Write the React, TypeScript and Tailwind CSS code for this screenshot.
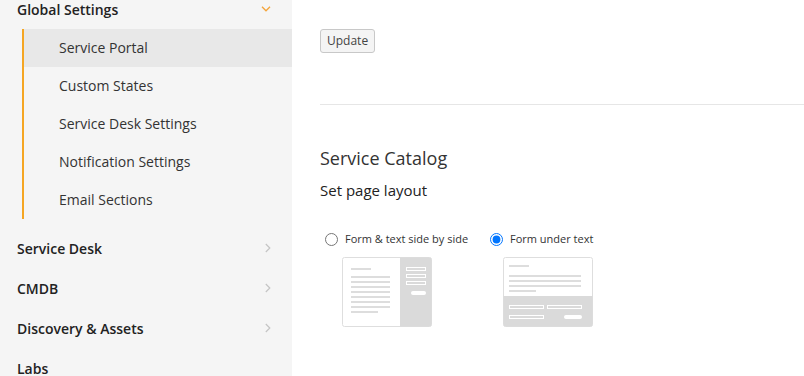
import React from "react";

const font = { fontFamily: '"Open Sans", "Liberation Sans", sans-serif' };

function ChevronDown() {
  return (
    <svg width="10" height="6" viewBox="0 0 10 6" className="block">
      <path d="M1 0.8 L5 4.8 L9 0.8" fill="none" stroke="#f4a43a" strokeWidth="1.3" />
    </svg>
  );
}

function ChevronRight() {
  return (
    <svg width="6" height="10" viewBox="0 0 6 10" className="block">
      <path d="M0.8 1 L4.8 5 L0.8 9" fill="none" stroke="#c4c4c4" strokeWidth="1.2" />
    </svg>
  );
}

function TopItem({ label, open, leaf }: { label: string; open?: boolean; leaf?: boolean }) {
  return (
    <div className="flex h-[40px] items-center justify-between pl-[17px] pr-[21px]">
      <span className="text-[14px] font-semibold text-[#222]">{label}</span>
      {leaf ? null : open ? <ChevronDown /> : <ChevronRight />}
    </div>
  );
}

function SubItem({ label, active }: { label: string; active?: boolean }) {
  return (
    <div
      className={`flex h-[38px] items-center pb-[1px] pl-[35px] text-[14px] text-[#333] ${
        active ? "bg-[#e8e8e8]" : ""
      }`}
    >
      {label}
    </div>
  );
}

function ThumbSide() {
  const lines = [19, 24, 29, 34, 39, 44, 49];
  return (
    <svg width="90" height="70" viewBox="0 0 90 70" className="block">
      <rect x="0.5" y="0.5" width="89" height="69" rx="2" fill="#fff" stroke="#dedede" />
      <path d="M58 0.5 H87.5 A2 2 0 0 1 89.5 2.5 V67.5 A2 2 0 0 1 87.5 69.5 H58 Z" fill="#dadada" />
      <rect x="9" y="11" width="20" height="2" fill="#dddddd" />
      {lines.map((y) => (
        <rect key={y} x="9" y={y} width="39" height="2" fill="#dddddd" />
      ))}
      <rect x="9" y="54" width="27" height="2" fill="#dddddd" />
      {[10, 17, 24].map((y) => (
        <rect key={y} x="64.5" y={y + 0.5} width="19" height="3" fill="none" stroke="#fff" strokeWidth="1" />
      ))}
      <rect x="69" y="34" width="15" height="4" rx="2" fill="#fff" />
    </svg>
  );
}

function ThumbUnder() {
  return (
    <svg width="90" height="70" viewBox="0 0 90 70" className="block">
      <rect x="0.5" y="0.5" width="89" height="69" rx="2" fill="#fff" stroke="#dedede" />
      <path d="M0.5 39 H89.5 V67.5 A2 2 0 0 1 87.5 69.5 H2.5 A2 2 0 0 1 0.5 67.5 Z" fill="#dadada" />
      <rect x="6" y="8" width="20" height="2" fill="#dddddd" />
      {[18, 23, 28].map((y) => (
        <rect key={y} x="6" y={y} width="72" height="2" fill="#dddddd" />
      ))}
      <rect x="6" y="33" width="27" height="2" fill="#dddddd" />
      <rect x="6.5" y="48.5" width="34" height="3" fill="none" stroke="#fff" />
      <rect x="44.5" y="48.5" width="34" height="3" fill="none" stroke="#fff" />
      <rect x="6.5" y="58.5" width="34" height="3" fill="none" stroke="#fff" />
      <rect x="61" y="58" width="18" height="4" rx="2" fill="#fff" />
    </svg>
  );
}

export default function App() {
  return (
    <div className="flex h-[376px] w-[804px] overflow-hidden bg-white" style={font}>
      <aside className="w-[292px] shrink-0 bg-[#f5f5f5]">
        <div className="-mt-[11px]">
          <TopItem label="Global Settings" open />
          <div className="ml-[22px] border-l-2 border-[#f5a623]">
            <SubItem label="Service Portal" active />
            <SubItem label="Custom States" />
            <SubItem label="Service Desk Settings" />
            <SubItem label="Notification Settings" />
            <SubItem label="Email Sections" />
          </div>
          <div className="mt-[9px]">
            <TopItem label="Service Desk" />
            <TopItem label="CMDB" />
            <TopItem label="Discovery & Assets" />
            <TopItem label="Labs" leaf />
          </div>
        </div>
      </aside>
      <main className="flex-1 pl-[28px]">
        <button className="mt-[29px] h-[24px] rounded-[3px] border border-[#c8c8c8] bg-[#f4f4f4] px-[6px] text-[12px] text-[#444]">
          Update
        </button>
        <div className="mt-[51px] border-t border-[#e6e6e6]" />
        <h2 className="mt-[41px] text-[18px] leading-[24px] font-normal text-[#333]">Service Catalog</h2>
        <p className="mt-[10px] text-[15px] leading-[20px] text-[#222]">Set page layout</p>
        <div className="mt-[31px] flex">
          <div className="w-[170px]">
            <label className="flex h-[16px] items-center">
              <input type="radio" name="layout" className="m-0 ml-[5px] h-[13px] w-[13px]" />
              <span className="ml-[7px] text-[11px] text-[#333]">Form &amp; text side by side</span>
            </label>
            <div className="mt-[10px] ml-[22px]">
              <ThumbSide />
            </div>
          </div>
          <div>
            <label className="flex h-[16px] items-center">
              <input type="radio" name="layout" defaultChecked className="m-0 h-[13px] w-[13px]" />
              <span className="ml-[7px] text-[11px] text-[#333]">Form under text</span>
            </label>
            <div className="mt-[10px] ml-[13px]">
              <ThumbUnder />
            </div>
          </div>
        </div>
      </main>
    </div>
  );
}
